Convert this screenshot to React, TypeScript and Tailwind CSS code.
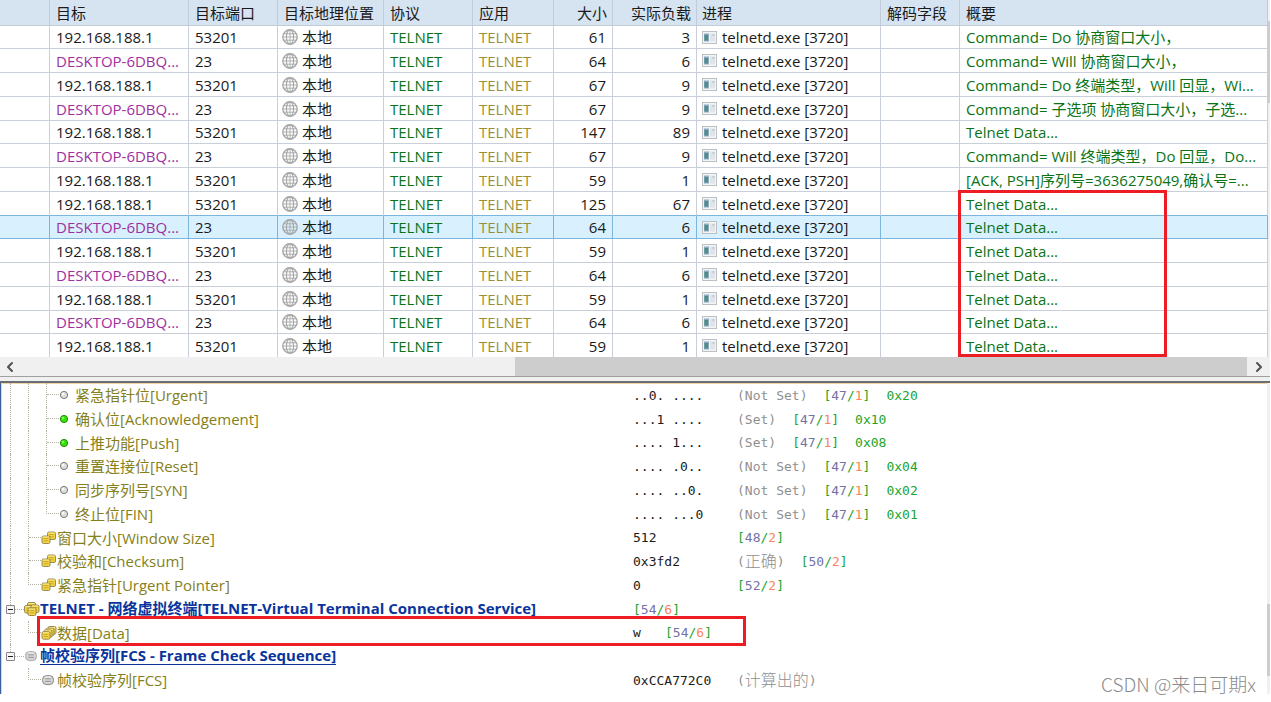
import React from "react";
import { ChevronLeft, ChevronRight } from "lucide-react";

type Packet = {
  target: string;
  port: string;
  size: number;
  payload: number;
  summary: string;
};

const LOCAL = "192.168.188.1";
const REMOTE = "DESKTOP-6DBQ...";

const packets: Packet[] = [
  { target: LOCAL, port: "53201", size: 61, payload: 3, summary: "Command= Do 协商窗口大小，" },
  { target: REMOTE, port: "23", size: 64, payload: 6, summary: "Command= Will 协商窗口大小，" },
  { target: LOCAL, port: "53201", size: 67, payload: 9, summary: "Command= Do 终端类型，Will 回显，Wi..." },
  { target: REMOTE, port: "23", size: 67, payload: 9, summary: "Command= 子选项 协商窗口大小，子选..." },
  { target: LOCAL, port: "53201", size: 147, payload: 89, summary: "Telnet Data..." },
  { target: REMOTE, port: "23", size: 67, payload: 9, summary: "Command= Will 终端类型，Do 回显，Do..." },
  { target: LOCAL, port: "53201", size: 59, payload: 1, summary: "[ACK, PSH]序列号=3636275049,确认号=..." },
  { target: LOCAL, port: "53201", size: 125, payload: 67, summary: "Telnet Data..." },
  { target: REMOTE, port: "23", size: 64, payload: 6, summary: "Telnet Data..." },
  { target: LOCAL, port: "53201", size: 59, payload: 1, summary: "Telnet Data..." },
  { target: REMOTE, port: "23", size: 64, payload: 6, summary: "Telnet Data..." },
  { target: LOCAL, port: "53201", size: 59, payload: 1, summary: "Telnet Data..." },
  { target: REMOTE, port: "23", size: 64, payload: 6, summary: "Telnet Data..." },
  { target: LOCAL, port: "53201", size: 59, payload: 1, summary: "Telnet Data..." },
];

const SELECTED = 8;

function GlobeIcon() {
  return (
    <svg viewBox="0 0 16 16" className="size-4 shrink-0" fill="none" stroke="#a6a6a6" strokeWidth="1.1" aria-hidden="true">
      <circle cx="8" cy="8" r="7.2" strokeWidth="1.4" />
      <ellipse cx="8" cy="8" rx="3.6" ry="7.2" />
      <path d="M8 1v14M1 8h14M2 4.8h12M2 11.2h12" strokeWidth="0.9" />
    </svg>
  );
}

function ProcessIcon() {
  return (
    <svg viewBox="0 0 15 13" className="h-[13px] w-[15px] shrink-0" aria-hidden="true">
      <rect x="0.5" y="0.5" width="14" height="12" fill="#f3f4f5" stroke="#bcc0c4" />
      <rect x="2" y="2.5" width="5" height="8" fill="#8fa9c4" />
      <rect x="2.5" y="4" width="3.5" height="5.5" fill="#4d8f80" />
      <rect x="8" y="2.5" width="5" height="8" fill="#e1e4e7" />
      <path d="M10.5 3h2v2h-2z" fill="#b9cfc4" />
    </svg>
  );
}

const headers: { label: string; right?: boolean }[] = [
  { label: "" },
  { label: "目标" },
  { label: "目标端口" },
  { label: "目标地理位置" },
  { label: "协议" },
  { label: "应用" },
  { label: "大小", right: true },
  { label: "实际负载", right: true },
  { label: "进程" },
  { label: "解码字段" },
  { label: "概要" },
];

function PacketTable() {
  return (
    <table className="w-full table-fixed border-separate border-spacing-0 text-[15px] leading-5">
      <colgroup>
        <col className="w-[50px]" />
        <col className="w-[139px]" />
        <col className="w-[89px]" />
        <col className="w-[106px]" />
        <col className="w-[89px]" />
        <col className="w-[81px]" />
        <col className="w-[59px]" />
        <col className="w-[84px]" />
        <col className="w-[184px]" />
        <col className="w-[79px]" />
        <col />
      </colgroup>
      <thead>
        <tr className="h-[26px] bg-[#d6e4f2]">
          {headers.map((h, i) => (
            <th
              key={i}
              scope="col"
              className={
                "overflow-hidden border-r border-b border-[#c3cad8] py-0 font-normal whitespace-nowrap " +
                (h.right ? "pr-[5px] text-right" : i === 8 ? "pl-[5px] text-left" : "pl-[6px] text-left")
              }
            >
              {h.label}
            </th>
          ))}
        </tr>
      </thead>
      <tbody>
        {packets.map((p, i) => {
          const line =
            i === SELECTED
              ? "border-[#7db6dc]"
              : i === SELECTED - 1
                ? "border-r-[#c8cfdb] border-b-[#7db6dc]"
                : "border-[#c8cfdb]";
          const cell = "overflow-hidden border-r border-b py-0 whitespace-nowrap group-last:border-b-0 " + line;
          return (
            <tr
              key={i}
              className={
                "group h-6 nth-[4n+1]:h-[23px] last:h-[23px] " + (i === SELECTED ? "bg-[#d9f1ff]" : "bg-white")
              }
            >
              <td className={cell} />
              <td className={cell + " pl-[6px] " + (p.target === REMOTE ? "text-[#a02fa0]" : "")}>{p.target}</td>
              <td className={cell + " pl-[6px]"}>{p.port}</td>
              <td className={cell + " pl-[4px]"}>
                <span className="flex items-center gap-1">
                  <GlobeIcon />
                  本地
                </span>
              </td>
              <td className={cell + " pl-[6px] text-[#0b7314]"}>TELNET</td>
              <td className={cell + " pl-[6px] text-[#9a8f35]"}>TELNET</td>
              <td className={cell + " pr-[6px] text-right"}>{p.size}</td>
              <td className={cell + " pr-[6px] text-right"}>{p.payload}</td>
              <td className={cell + " pl-[5px]"}>
                <span className="flex items-center gap-[5px]">
                  <ProcessIcon />
                  telnetd.exe [3720]
                </span>
              </td>
              <td className={cell} />
              <td className={cell + " pl-[6px] text-[#0b7314]"}>{p.summary}</td>
            </tr>
          );
        })}
      </tbody>
    </table>
  );
}

/* ---------- protocol tree ---------- */

type GuideKind = "line" | "tee" | "corner" | "blank";
type IconKind = "grayDot" | "greenDot" | "pair" | "stack" | "layers" | "pill" | "smallPill";

function Guide({ kind }: { kind: GuideKind }) {
  if (kind === "blank") return <span className="w-[18px] shrink-0" />;
  if (kind === "line")
    return (
      <span className="flex w-[18px] shrink-0 pl-2">
        <span className="h-full border-l border-dotted border-[#b3b3a4]" />
      </span>
    );
  return (
    <span className="flex w-[21px] shrink-0 pl-2">
      <span
        className={
          "w-full border-l border-dotted border-[#b3b3a4] " + (kind === "corner" ? "h-1/2 border-b" : "h-full")
        }
      >
        {kind === "tee" && <span className="block h-1/2 border-b border-dotted border-[#b3b3a4]" />}
      </span>
    </span>
  );
}

function Expander({ last, label }: { last?: boolean; label: string }) {
  return (
    <span className="flex w-[22px] shrink-0 items-center pl-1">
      <span className="flex h-full flex-col items-center">
        <span className="grow border-l border-dotted border-[#b3b3a4]" />
        <button
          type="button"
          aria-label={label}
          className="flex size-[9px] items-center justify-center rounded-[1px] border border-[#858585] bg-[#f6f6f6]"
        >
          <span className="h-px w-[5px] bg-[#222]" />
        </button>
        <span className={"grow " + (last ? "" : "border-l border-dotted border-[#b3b3a4]")} />
      </span>
      <span className="grow border-b border-dotted border-[#b3b3a4]" />
    </span>
  );
}

function Sheet({ x, y }: { x: number; y: number }) {
  return (
    <g transform={`translate(${x} ${y})`}>
      <rect x="0.5" y="0.5" width="8" height="7.5" rx="1.5" fill="#f3d440" stroke="#8f8050" strokeWidth="0.9" />
      <path d="M2.2 3h4.6M2.2 5.3h4.6" stroke="#b3961f" strokeWidth="0.7" />
      <path d="M1.5 1.5h6" stroke="#fff3a6" strokeWidth="0.8" />
    </g>
  );
}

function NodeIcon({ kind }: { kind: IconKind }) {
  if (kind === "grayDot" || kind === "greenDot") {
    const green = kind === "greenDot";
    return (
      <svg viewBox="0 0 16 16" className="size-4 shrink-0" aria-hidden="true">
        <circle cx="5" cy="8" r="3.6" fill={green ? "#35e30b" : "#dedede"} stroke={green ? "#28860f" : "#777"} />
        <circle cx="4" cy="7" r="1.3" fill={green ? "#7bff55" : "#fafafa"} />
      </svg>
    );
  }
  return (
    <svg viewBox="0 0 16 16" className="size-4 shrink-0" aria-hidden="true">
      {kind === "pair" && (
        <>
          <Sheet x={6} y={1.5} />
          <Sheet x={0.5} y={5.5} />
        </>
      )}
      {kind === "stack" && (
        <>
          <Sheet x={6.5} y={1} />
          <Sheet x={4.5} y={2.7} />
          <Sheet x={2.5} y={4.4} />
          <Sheet x={0.5} y={6.2} />
        </>
      )}
      {kind === "layers" && (
        <>
          <Sheet x={3} y={1} />
          <Sheet x={0} y={4} />
          <Sheet x={6.5} y={3.5} />
          <Sheet x={3.5} y={6.5} />
        </>
      )}
      {(kind === "pill" || kind === "smallPill") && (
        <>
          <rect x="1.5" y="3.6" width="11" height="9" rx="4" fill="#d4d4d4" stroke={kind === "pill" ? "#aaa" : "#888"} />
          <path d="M4.2 6.8h5.6M4.2 9.4h5.6" stroke="#969696" />
          <path d="M4 5h6" stroke="#fff" strokeWidth="0.8" />
        </>
      )}
    </svg>
  );
}

function Range({ at, len }: { at: string; len: string }) {
  return (
    <span className="text-[#1ba52b]">
      [<span className="text-[#7472a8]">{at}</span>/<span className="text-[#fb8560]">{len}</span>]
    </span>
  );
}

type Row = {
  guides: GuideKind[];
  icon: IconKind;
  name: string;
  root?: "open" | "last";
  value?: string;
  note?: string;
  cjk?: boolean;
  range?: [string, string];
  hex?: string;
  inline?: boolean;
};

const rows: Row[] = [
  { guides: ["line", "line", "tee"], icon: "grayDot", name: "紧急指针位[Urgent]", value: "..0. ....", note: "Not Set", range: ["47", "1"], hex: "0x20" },
  { guides: ["line", "line", "tee"], icon: "greenDot", name: "确认位[Acknowledgement]", value: "...1 ....", note: "Set", range: ["47", "1"], hex: "0x10" },
  { guides: ["line", "line", "tee"], icon: "greenDot", name: "上推功能[Push]", value: ".... 1...", note: "Set", range: ["47", "1"], hex: "0x08" },
  { guides: ["line", "line", "tee"], icon: "grayDot", name: "重置连接位[Reset]", value: ".... .0..", note: "Not Set", range: ["47", "1"], hex: "0x04" },
  { guides: ["line", "line", "tee"], icon: "grayDot", name: "同步序列号[SYN]", value: ".... ..0.", note: "Not Set", range: ["47", "1"], hex: "0x02" },
  { guides: ["line", "line", "corner"], icon: "grayDot", name: "终止位[FIN]", value: ".... ...0", note: "Not Set", range: ["47", "1"], hex: "0x01" },
  { guides: ["line", "tee"], icon: "pair", name: "窗口大小[Window Size]", value: "512", range: ["48", "2"] },
  { guides: ["line", "tee"], icon: "pair", name: "校验和[Checksum]", value: "0x3fd2", note: "正确", cjk: true, range: ["50", "2"] },
  { guides: ["line", "corner"], icon: "pair", name: "紧急指针[Urgent Pointer]", value: "0", range: ["52", "2"] },
  { guides: [], root: "open", icon: "layers", name: "TELNET - 网络虚拟终端[TELNET-Virtual Terminal Connection Service]", range: ["54", "6"], inline: true },
  { guides: ["line", "corner"], icon: "stack", name: "数据[Data]", value: "w", range: ["54", "6"], inline: true },
  { guides: [], root: "last", icon: "pill", name: "帧校验序列[FCS - Frame Check Sequence]" },
  { guides: ["blank", "corner"], icon: "smallPill", name: "帧校验序列[FCS]", value: "0xCCA772C0", note: "计算出的", cjk: true },
];

function TreeRow({ row }: { row: Row }) {
  return (
    <li className="flex h-6 whitespace-nowrap nth-[4n+3]:h-[23px]">
      <span className="flex w-[631px] shrink-0">
        {row.guides.map((g, i) => (
          <Guide key={i} kind={g} />
        ))}
        {row.root && <Expander last={row.root === "last"} label={"折叠 " + row.name} />}
        <span className="flex items-center">
          <NodeIcon kind={row.icon} />
          {row.root ? (
            <a href="#" className="border-b border-[#0a349b] text-[15px] leading-[17px] font-bold text-[#0a349b]">
              {row.name}
            </a>
          ) : (
            <span className="text-[15px] leading-5 text-[#85801a]">
              {row.name}
            </span>
          )}
        </span>
      </span>
      <span className="flex items-center pt-px font-['DejaVu_Sans_Mono','Noto_Sans_CJK_SC',monospace] text-[13px] leading-5">
        {row.value && <span className={row.inline ? "w-8" : "w-[104px]"}>{row.value}</span>}
        {row.note && (
          <span className="mr-4 flex items-center text-[#8f8f8f]">
            (<span className={row.cjk ? "text-base leading-5 font-light" : "whitespace-pre"}>{row.note}</span>)
          </span>
        )}
        {row.range && <Range at={row.range[0]} len={row.range[1]} />}
        {row.hex && <span className="ml-4 text-[#1ba52b]">{row.hex}</span>}
      </span>
    </li>
  );
}

export default function App() {
  return (
    <main lang="zh-CN" className="relative min-h-screen overflow-hidden bg-white pr-px font-['Open_Sans','Noto_Sans_CJK_SC',sans-serif] text-[#1a1a1a]">
      <section className="relative flex">
        <div className="min-w-0 grow">
          <PacketTable />
        </div>
        <div className="w-[2px] shrink-0 bg-[#f0f0f0] pt-[21px]">
          <div className="h-[82px] bg-[#cdcdcd]" />
        </div>
        <div className="pointer-events-none absolute top-[190px] bottom-0 left-[958px] w-[209px] border-3 border-[#ee1c25]" />
      </section>

      <div className="flex h-[19px] items-stretch bg-[#f0f0f0]">
        <button type="button" aria-label="向左滚动" className="flex w-5 items-center justify-center">
          <ChevronLeft className="size-4 text-[#505050]" strokeWidth={3} />
        </button>
        <div className="flex grow">
          <div className="w-[495px] shrink-0" />
          <div className="grow bg-[#cdcdcd]" />
        </div>
        <button type="button" aria-label="向右滚动" className="flex w-[23px] items-center justify-center">
          <ChevronRight className="size-4 text-[#505050]" strokeWidth={3} />
        </button>
      </div>
      <div className="h-[7px] border-t border-b-2 border-t-[#a0a0a0] border-b-[#696d74] bg-[#f0f0f0]" />

      <section className="relative flex border-l border-l-[#3c5f9f]">
        <ul className="min-w-0 grow overflow-hidden border-l border-[#f3d3a6] pb-[2px] shadow-[inset_0_1px_0_#f3d3a6]">
          {rows.map((row, i) => (
            <TreeRow key={i} row={row} />
          ))}
        </ul>
        <div className="w-[3px] shrink-0 bg-[#f0f0f0] pt-[221px]">
          <div className="h-[72px] bg-[#cdcdcd]" />
        </div>
        <div className="pointer-events-none absolute top-[233px] left-[36px] h-[30px] w-[709px] border-3 border-[#ee1c25]" />
      </section>

      <p className="absolute right-[15px] bottom-[6px] font-['Noto_Sans_CJK_SC',sans-serif] text-[19px] leading-6 font-light text-[#8c8c8c]">
        CSDN @来日可期x
      </p>
    </main>
  );
}
